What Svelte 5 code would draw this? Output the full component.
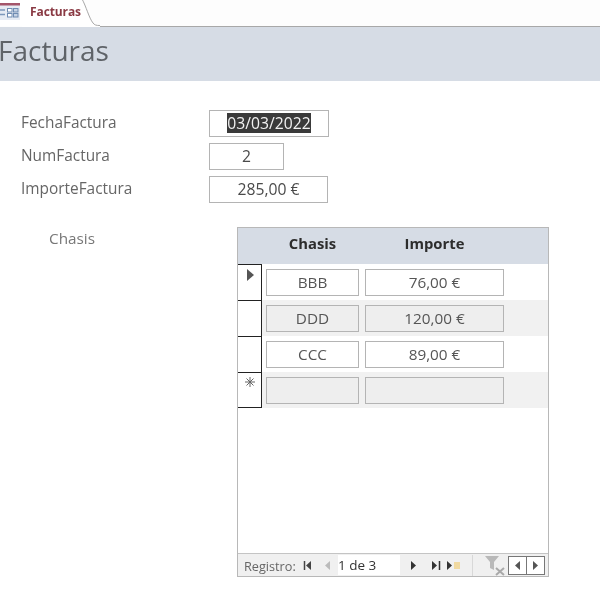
<script>
  const fields = [
    { label: 'FechaFactura', value: '03/03/2022', cls: 'w-date', selected: true },
    { label: 'NumFactura', value: '2', cls: 'w-num' },
    { label: 'ImporteFactura', value: '285,00 €', cls: 'w-imp' }
  ];
  const rows = [
    { chasis: 'BBB', importe: '76,00 €', mark: 'arrow' },
    { chasis: 'DDD', importe: '120,00 €', alt: true },
    { chasis: 'CCC', importe: '89,00 €' },
    { chasis: '', importe: '', alt: true, mark: 'star' }
  ];
</script>

<div class="page">
  <div class="tabbar">
    <div class="tabicon">
      <svg width="20" height="18" viewBox="0 0 20 18">
        <rect x="0" y="1" width="20" height="17" fill="#e6ebf3"/>
        <rect x="0" y="1" width="20" height="2.500" fill="#a4556a"/>
        <path d="M0 8h5M0 12.500h5" stroke="#7d98bb" stroke-width="1.600"/>
        <rect x="7.500" y="6.500" width="4.500" height="3.500" fill="#fff" stroke="#6f8cb2"/>
        <rect x="7.500" y="11.500" width="4.500" height="3.500" fill="#fff" stroke="#6f8cb2"/>
        <rect x="13.500" y="6.500" width="4.500" height="3.500" fill="#c5d2e4" stroke="#6f8cb2"/>
        <rect x="13.500" y="11.500" width="4.500" height="3.500" fill="#c5d2e4" stroke="#6f8cb2"/>
      </svg>
    </div>
    <div class="tab">Facturas</div>
    <svg class="tabcurve" width="18" height="27" viewBox="0 0 18 27">
      <path d="M0 -1C4 6 7 18 11 23C12.500 25 14 25.500 18 25.500V27H0Z" fill="#fff"/>
      <path d="M0 -1C4 6 7 18 11 23C12.500 25 14 25.500 18 25.500" fill="none" stroke="#a8a8a8"/>
    </svg>
    <div class="tabrest"></div>
  </div>

  <header class="title"><h1>Facturas</h1></header>

  <section class="fields">
    {#each fields as f}
      <div class="field">
        <span class="label">{f.label}</span>
        <div class="box {f.cls}">
          {#if f.selected}<span class="sel">{f.value}</span>{:else}{f.value}{/if}
        </div>
      </div>
    {/each}
  </section>

  <section class="sub">
    <span class="sublabel">Chasis</span>
    <div class="subform">
      <div class="gridhead">
        <span class="hchasis">Chasis</span>
        <span class="himporte">Importe</span>
      </div>
      <div class="gridbody">
        {#each rows as r, i}
          <div class="row" class:alt={r.alt}>
            <div class="selector" class:end={i === rows.length - 1}>
              {#if r.mark === 'arrow'}
                <svg width="7" height="12" viewBox="0 0 7 12"><path d="M0 0L7 6L0 12Z" fill="#555"/></svg>
              {:else if r.mark === 'star'}
                <svg class="star" width="10" height="10" viewBox="0 0 10 10"><path d="M5 0V10M0 5H10M1.500 1.500L8.500 8.500M8.500 1.500L1.500 8.500" stroke="#666" stroke-width="1"/></svg>
              {/if}
            </div>
            <div class="cell c1">{r.chasis}</div>
            <div class="cell c2">{r.importe}</div>
          </div>
        {/each}
      </div>
      <div class="nav">
        <span class="reg">Registro:</span>
        <svg class="n first" width="10" height="9" viewBox="0 0 10 9"><path d="M1.500 0V9" stroke="#444" stroke-width="1.500"/><path d="M8 0V9L3 4.500Z" fill="#444"/></svg>
        <svg class="n prev" width="6" height="9" viewBox="0 0 6 9"><path d="M5 0V9L0 4.500Z" fill="#bbb"/></svg>
        <div class="pos">1 de 3</div>
        <svg class="n next" width="6" height="9" viewBox="0 0 6 9"><path d="M0 0V9L5 4.500Z" fill="#333"/></svg>
        <svg class="n lastrec" width="10" height="9" viewBox="0 0 10 9"><path d="M1 0V9L6 4.500Z" fill="#333"/><path d="M8.500 0V9" stroke="#333" stroke-width="1.500"/></svg>
        <svg class="n new" width="14" height="9" viewBox="0 0 14 9"><path d="M0 0V9L5 4.500Z" fill="#333"/><rect x="7" y="1" width="6" height="7" fill="#f0d9a0"/></svg>
        <span class="sep"></span>
        <svg class="n filter" width="22" height="21" viewBox="0 0 22 21"><path d="M1 1H15L10 7V15L6 13V7Z" fill="#b9b9b9"/><path d="M12 13L20 20M20 13L12 20" stroke="#a9a9a9" stroke-width="2"/></svg>
        <div class="sb">
          <div class="sbbtn"><svg width="6" height="9" viewBox="0 0 6 9"><path d="M5 0V9L0 4.500Z" fill="#555"/></svg></div>
          <div class="sbbtn"><svg width="6" height="9" viewBox="0 0 6 9"><path d="M0 0V9L5 4.500Z" fill="#555"/></svg></div>
        </div>
      </div>
    </div>
  </section>
</div>

<style>
  :global(body) { margin: 0; background: #fff; }
  .page {
    width: 600px; height: 594px; overflow: hidden; background: #fff;
    font-family: "Open Sans", "Noto Sans", sans-serif; color: #595959;
    filter: blur(0.35px);
  }
  .tabbar { display: flex; height: 27px; background: #fdfdfd; }
  .tabicon { width: 22px; height: 26px; background: #fff; flex: none; padding-top: 2px; box-sizing: border-box; }
  .tabicon svg { display: block; }
  .tab { width: 60px; background: #fff; padding: 3px 0 0 8px; box-sizing: border-box; flex: none;
    font-size: 12px; font-weight: 700; color: #8a3a44; height: 27px; letter-spacing: -0.1px; white-space: nowrap; }
  .tabcurve { flex: none; }
  .tabrest { flex: 1; border-bottom: 1px solid #a8a8a8; height: 26px; }
  .title { height: 54px; background: #d6dce5; display: flex; align-items: center; }
  h1 { margin: 0 0 6px 0; font-size: 28px; font-weight: 400; color: #5f6368; line-height: 1.2; text-indent: -2px; }
  .fields { padding: 29px 0 0 21px; display: flex; flex-direction: column; gap: 6px; }
  .field { display: flex; height: 27px; }
  .label { width: 188px; font-size: 15.400px; line-height: 24px; margin-top: 1px; color: #666; flex: none; }
  .box { border: 1px solid #b4b4b4; box-sizing: border-box; height: 27px; text-align: center;
    font-size: 15.700px; line-height: 25px; color: #4a4a4a; background: #fff; }
  .w-date { width: 120px; }
  .w-num { width: 75px; }
  .w-imp { width: 119px; }
  .sel { background: #3a3a3a; color: #f2f2f2; display: inline-block; line-height: 20px; }
  .sub { display: flex; margin-top: 24px; }
  .sublabel { width: 188px; margin-left: 49px; font-size: 15.300px; line-height: 22px; color: #777; flex: none; }
  .subform { width: 312px; height: 350px; box-sizing: border-box; border: 1px solid #b8b8b8;
    display: flex; flex-direction: column; background: #fff; }
  .gridhead { height: 36px; background: #d6dce5; flex: none; display: flex; font-weight: 700; font-size: 14.800px; color: #2d2d2d; line-height: 30px; padding-left: 28px; }
  .hchasis { width: 93px; text-align: center; flex: none; }
  .himporte { width: 139px; margin-left: 6px; text-align: center; flex: none; }
  .gridbody { flex: 1; }
  .row { height: 36px; display: flex; align-items: flex-start; }
  .row.alt { background: #f1f1f1; }
  .selector { width: 24px; height: 36px; box-sizing: border-box; border-top: 1px solid #222; border-right: 1px solid #222; background: #fff;
    flex: none; padding-left: 9px; padding-top: 4px; }
  .selector.end { border-bottom: 1px solid #222; }
  .selector svg { display: block; }
  .selector .star { margin-left: -2px; }
  .cell { height: 27px; margin-top: 5px; box-sizing: border-box; border: 1px solid #b4b4b4; text-align: center;
    font-size: 15.300px; line-height: 25px; color: #555; flex: none; }
  .row:not(.alt) .cell { background: #fff; }
  .row.alt .cell { background: #eeeeee; }
  .c1 { width: 93px; margin-left: 4px; }
  .c2 { width: 139px; margin-left: 6px; }
  .nav { height: 23px; flex: none; background: #f0f0f0; border-top: 1px solid #c4c4c4; display: flex; align-items: center;
    box-sizing: border-box; }
  .reg { font-size: 12.700px; line-height: 22px; padding-top: 1px; color: #666; margin-left: 6px; width: 58px; flex: none; }
  .n { flex: none; display: block; }
  .first { margin-left: 1px; }
  .prev { margin-left: 12px; }
  .pos { width: 62px; margin-left: 7px; height: 20px; background: #fff; font-size: 13.500px; line-height: 21px; color: #333; padding-left: 0; box-sizing: border-box; flex: none; }
  .next { margin-left: 11px; }
  .lastrec { margin-left: 14px; }
  .new { margin-left: 6px; }
  .sep { width: 1px; height: 21px; background: #d8d8d8; margin-left: 11px; flex: none; }
  .filter { margin-left: 11px; }
  .sb { display: flex; margin-left: 2px; flex: none; }
  .sbbtn { width: 19px; height: 19px; box-sizing: border-box; border: 1px solid #777; margin-right: -1px; background: #fff; display: flex; align-items: center; justify-content: center; }
</style>
